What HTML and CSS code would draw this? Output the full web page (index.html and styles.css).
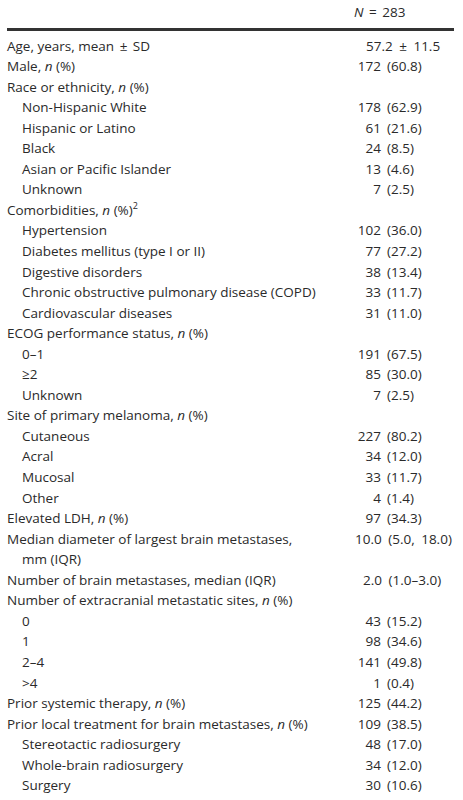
FILE: index.html
```html
<!DOCTYPE html>
<html lang="en">
<head>
  <meta charset="UTF-8">
  <meta name="viewport" content="width=device-width, initial-scale=1">
  <title>Baseline characteristics</title>
  <link rel="stylesheet" href="styles.css">
</head>
<body>

<table class="stats">
  <colgroup>
    <col class="c-label">
    <col class="c-n">
    <col class="c-pct">
  </colgroup>
  <thead>
    <tr>
      <th></th>
      <th colspan="2" class="total"><i>N</i> = 283</th>
    </tr>
  </thead>
  <tbody>
    <tr class="first"><td>Age, years, mean <span class="pm">±</span> SD</td><td colspan="2" class="wide age">57.2 ± 11.5</td></tr>
    <tr><td>Male, <i>n</i> (%)</td><td class="n">172</td><td class="pct">(60.8)</td></tr>
    <tr><td>Race or ethnicity, <i>n</i> (%)</td><td></td><td></td></tr>
    <tr><td class="sub">Non-Hispanic White</td><td class="n">178</td><td class="pct">(62.9)</td></tr>
    <tr><td class="sub">Hispanic or Latino</td><td class="n">61</td><td class="pct">(21.6)</td></tr>
    <tr><td class="sub">Black</td><td class="n">24</td><td class="pct">(8.5)</td></tr>
    <tr><td class="sub">Asian or Pacific Islander</td><td class="n">13</td><td class="pct">(4.6)</td></tr>
    <tr><td class="sub">Unknown</td><td class="n">7</td><td class="pct">(2.5)</td></tr>
    <tr><td>Comorbidities, <i>n</i> (%)<sup>2</sup></td><td></td><td></td></tr>
    <tr><td class="sub">Hypertension</td><td class="n">102</td><td class="pct">(36.0)</td></tr>
    <tr><td class="sub">Diabetes mellitus (type I or II)</td><td class="n">77</td><td class="pct">(27.2)</td></tr>
    <tr><td class="sub">Digestive disorders</td><td class="n">38</td><td class="pct">(13.4)</td></tr>
    <tr><td class="sub">Chronic obstructive pulmonary disease (COPD)</td><td class="n">33</td><td class="pct">(11.7)</td></tr>
    <tr><td class="sub">Cardiovascular diseases</td><td class="n">31</td><td class="pct">(11.0)</td></tr>
    <tr><td>ECOG performance status, <i>n</i> (%)</td><td></td><td></td></tr>
    <tr><td class="sub">0–1</td><td class="n">191</td><td class="pct">(67.5)</td></tr>
    <tr><td class="sub">≥2</td><td class="n">85</td><td class="pct">(30.0)</td></tr>
    <tr><td class="sub">Unknown</td><td class="n">7</td><td class="pct">(2.5)</td></tr>
    <tr><td>Site of primary melanoma, <i>n</i> (%)</td><td></td><td></td></tr>
    <tr><td class="sub">Cutaneous</td><td class="n">227</td><td class="pct">(80.2)</td></tr>
    <tr><td class="sub">Acral</td><td class="n">34</td><td class="pct">(12.0)</td></tr>
    <tr><td class="sub">Mucosal</td><td class="n">33</td><td class="pct">(11.7)</td></tr>
    <tr><td class="sub">Other</td><td class="n">4</td><td class="pct">(1.4)</td></tr>
    <tr><td>Elevated LDH, <i>n</i> (%)</td><td class="n">97</td><td class="pct">(34.3)</td></tr>
    <tr><td class="hang">Median diameter of largest brain metastases,<br>mm (IQR)</td><td colspan="2" class="wide diam">10.0 (5.0, 18.0)</td></tr>
    <tr><td>Number of brain metastases, median (IQR)</td><td colspan="2" class="wide count">2.0 (1.0–3.0)</td></tr>
    <tr><td>Number of extracranial metastatic sites, <i>n</i> (%)</td><td></td><td></td></tr>
    <tr><td class="sub">0</td><td class="n">43</td><td class="pct">(15.2)</td></tr>
    <tr><td class="sub">1</td><td class="n">98</td><td class="pct">(34.6)</td></tr>
    <tr><td class="sub">2–4</td><td class="n">141</td><td class="pct">(49.8)</td></tr>
    <tr><td class="sub">&gt;4</td><td class="n">1</td><td class="pct">(0.4)</td></tr>
    <tr><td>Prior systemic therapy, <i>n</i> (%)</td><td class="n">125</td><td class="pct">(44.2)</td></tr>
    <tr><td>Prior local treatment for brain metastases, <i>n</i> (%)</td><td class="n">109</td><td class="pct">(38.5)</td></tr>
    <tr><td class="sub">Stereotactic radiosurgery</td><td class="n">48</td><td class="pct">(17.0)</td></tr>
    <tr><td class="sub">Whole-brain radiosurgery</td><td class="n">34</td><td class="pct">(12.0)</td></tr>
    <tr><td class="sub">Surgery</td><td class="n">30</td><td class="pct">(10.6)</td></tr>
  </tbody>
</table>

</body>
</html>
```

FILE: styles.css
```css
body {
  margin: 0;
  padding: 0;
  background: #fff;
  color: #2a2a2a;
  font-family: "Open Sans", "Noto Sans", sans-serif;
  font-size: 13.5px;
}
.stats {
  margin-left: 7px;
  border-collapse: collapse;
  table-layout: fixed;
  width: 447px;
}
.c-label { width: 340px; }
.c-n { width: 34px; }
.stats th,
.stats td {
  padding: 0;
  line-height: 20.55px;
  white-space: nowrap;
  vertical-align: top;
  font-weight: normal;
  text-align: left;
}
.stats thead th {
  padding-top: 2px;
  padding-bottom: 5px;
  border-bottom: 3px solid #333;
}
.stats .total {
  padding-left: 7px;
  word-spacing: 2px;
}
.stats tr.first td {
  padding-top: 5px;
}
.stats td.sub {
  padding-left: 15px;
}
.stats td.hang {
  padding-left: 15px;
  text-indent: -15px;
}
.stats td.n {
  text-align: right;
}
.stats td.pct {
  padding-left: 6px;
}
.stats td.wide {
  word-spacing: 3px;
}
.stats td.age { padding-left: 19px; }
.stats td.diam { padding-left: 8px; }
.stats td.count { padding-left: 16px; }
.pm {
  margin: 0 2px;
}
sup {
  font-size: 9px;
  line-height: 0;
  vertical-align: 6px;
}
```
